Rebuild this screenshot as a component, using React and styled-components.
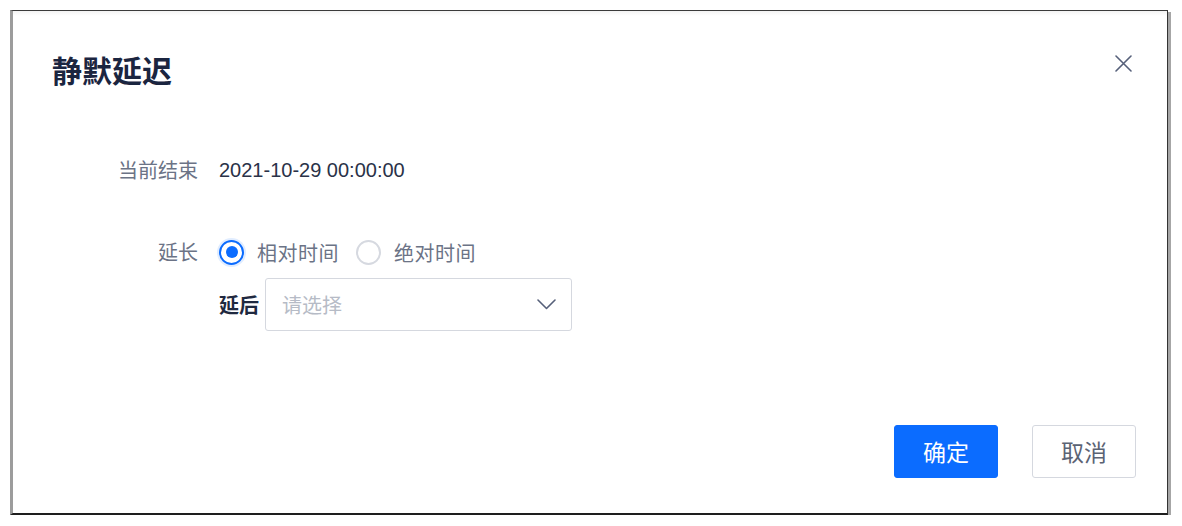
import styled, { createGlobalStyle } from "styled-components";

const GlobalStyle = createGlobalStyle`
    body {
        margin: 0;
        background: #fff;
        font-family: "Liberation Sans", "Noto Sans CJK SC", sans-serif;
    }
`

function App () {
    return (
        <>
            <GlobalStyle />
            <Frame>
                <Header>
                    <Title>静默延迟</Title>
                    <Close aria-label="close">
                        <svg width="17" height="17" viewBox="0 0 17 17" fill="none">
                            <path d="M1 1L16 16M16 1L1 16" stroke="#56607a" strokeWidth="1.6" strokeLinecap="round" />
                        </svg>
                    </Close>
                </Header>
                <Form>
                    <Row>
                        <Label>当前结束</Label>
                        <Value>2021-10-29 00:00:00</Value>
                    </Row>
                    <Row $top="52px">
                        <Label>延长</Label>
                        <Column>
                            <Radios>
                                <Radio>
                                    <Dot $checked />
                                    <span>相对时间</span>
                                </Radio>
                                <Radio>
                                    <Dot />
                                    <span>绝对时间</span>
                                </Radio>
                            </Radios>
                            <SubRow>
                                <SubLabel>延后</SubLabel>
                                <Select>
                                    <span>请选择</span>
                                    <svg width="19" height="11" viewBox="0 0 19 11" fill="none">
                                        <path d="M1 1L9.5 9.5L18 1" stroke="#56607a" strokeWidth="1.6" strokeLinecap="round" strokeLinejoin="round" />
                                    </svg>
                                </Select>
                            </SubRow>
                        </Column>
                    </Row>
                </Form>
                <Footer>
                    <Button $primary>确定</Button>
                    <Button>取消</Button>
                </Footer>
            </Frame>
        </>
    )
}

const Frame = styled.div`
    box-sizing: border-box;
    width: 1158px;
    height: 505px;
    margin: 10px 0 0 10px;

    border-top: 1px solid #3a3a3a;
    border-left: 3px solid #9c9c9c;
    border-right: 1px solid #333;
    border-bottom: 2px solid #1e1e1e;
    box-shadow: 3px 2px 0 #a6a6a6;
    background: linear-gradient(#f3f3f3, #fff 5px);

    display: flex;
    flex-direction: column;
`

const Header = styled.div`
    padding: 40px 35px 0 39px;
    display: flex;
    justify-content: space-between;
    align-items: flex-start;
`

const Title = styled.h1`
    margin: 0;
    font-family: "Noto Sans CJK SC", sans-serif;
    font-size: 30px;
    font-weight: 700;
    line-height: 36px;
    color: #1b2540;
`

const Close = styled.div`
    width: 17px;
    height: 17px;
    margin-top: 4px;
    display: flex;
`

const Form = styled.div`
    margin: 68px 0 0 99px;
    display: flex;
    flex-direction: column;
`

const Row = styled.div`
    margin-top: ${({ $top }) => $top || "0"};
    display: flex;
    align-items: flex-start;
    gap: 21px;
`

const Label = styled.div`
    width: 86px;
    text-align: right;
    font-family: "Noto Sans CJK SC", sans-serif;
    font-size: 20px;
    line-height: 30px;
    color: #6b7386;
`

const Value = styled.div`
    font-family: "Liberation Sans", sans-serif;
    font-size: 20px;
    line-height: 30px;
    color: #2a3248;
`

const Column = styled.div`
    display: flex;
    flex-direction: column;
`

const Radios = styled.div`
    height: 30px;
    display: flex;
    align-items: center;
    gap: 17px;
`

const Radio = styled.label`
    display: flex;
    align-items: center;
    gap: 13px;

    span {
        font-family: "Noto Sans CJK SC", sans-serif;
        font-size: 20px;
        letter-spacing: 0.5px;
        color: #6b7386;
    }
`

const Dot = styled.span`
    box-sizing: border-box;
    width: 25px;
    height: 25px;
    border-radius: 50%;
    border: 2px solid ${({ $checked }) => ($checked ? "#0b6cff" : "#d6d9e0")};
    box-shadow: ${({ $checked }) => ($checked ? "0 0 0 2px rgba(11,108,255,0.12)" : "none")};
    display: flex;
    justify-content: center;
    align-items: center;

    &::after {
        content: "";
        width: 12px;
        height: 12px;
        border-radius: 50%;
        background: ${({ $checked }) => ($checked ? "#0b6cff" : "transparent")};
    }
`

const SubRow = styled.div`
    margin-top: 11px;
    display: flex;
    align-items: center;
    gap: 6px;
`

const SubLabel = styled.span`
    font-family: "Noto Sans CJK SC", sans-serif;
    font-size: 20px;
    font-weight: 700;
    color: #1f2940;
`

const Select = styled.div`
    box-sizing: border-box;
    width: 307px;
    height: 53px;
    padding: 0 15px 0 16px;
    border: 1px solid #d5d8df;
    border-radius: 3px;
    display: flex;
    justify-content: space-between;
    align-items: center;

    span {
        font-family: "Noto Sans CJK SC", sans-serif;
        font-size: 20px;
        color: #b6bbc6;
    }
`

const Footer = styled.div`
    margin-top: auto;
    padding: 0 31px 35px 0;
    display: flex;
    justify-content: flex-end;
    gap: 34px;
`

const Button = styled.button`
    all: unset;
    box-sizing: border-box;
    width: 104px;
    height: 53px;
    border-radius: 3px;
    border: 1px solid ${({ $primary }) => ($primary ? "#0b6cff" : "#d5d8df")};
    background: ${({ $primary }) => ($primary ? "#0b6cff" : "#fff")};

    font-family: "Noto Sans CJK SC", sans-serif;
    font-size: 23px;
    text-align: center;
    line-height: 51px;
    color: ${({ $primary }) => ($primary ? "#fff" : "#5b6374")};
`

export default App
